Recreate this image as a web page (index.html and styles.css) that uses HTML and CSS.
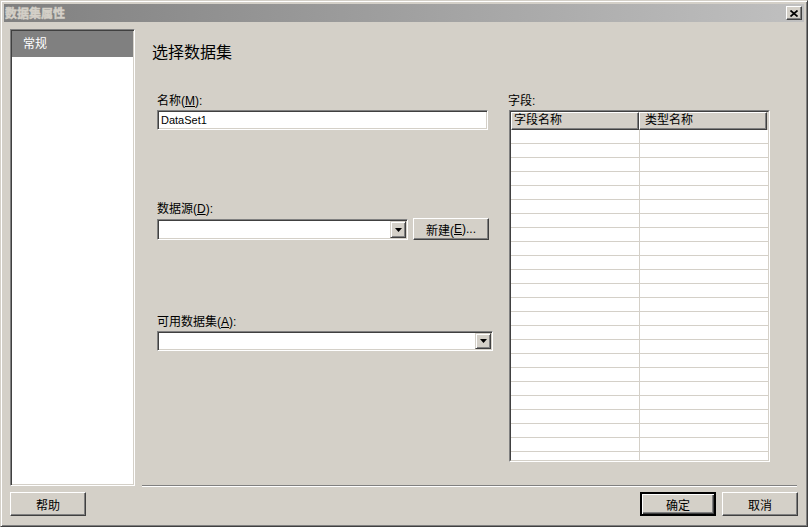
FILE: index.html
```html
<!DOCTYPE html>
<html lang="zh-CN">
<head>
<meta charset="utf-8">
<title>数据集属性</title>
<link rel="stylesheet" href="styles.css">
</head>
<body>
<div class="window">
  <div class="titlebar">
    <span class="title">数据集属性</span>
    <span class="close-btn"><svg width="8" height="7" viewBox="0 0 8 7"><path d="M0.5 0.5 L7.5 6.5 M7.5 0.5 L0.5 6.5" stroke="#000" stroke-width="1.7" fill="none"/></svg></span>
  </div>
  <div class="body">
    <div class="sidebar">
      <div class="nav-item selected">常规</div>
    </div>
    <div class="main">
      <div class="heading">选择数据集</div>
      <div class="columns">
        <div class="form-col">
          <div class="label">名称(<u>M</u>):</div>
          <div class="textbox name-box">DataSet1</div>
          <div class="label ds-label">数据源(<u>D</u>):</div>
          <div class="combo-row">
            <div class="combo ds-combo">
              <div class="combo-field"></div>
              <span class="drop-btn"><svg width="7" height="4" viewBox="0 0 7 4"><polygon points="0,0 7,0 3.5,4" fill="#000"/></svg></span>
            </div>
            <div class="btn new-btn">新建(<u>E</u>)...</div>
          </div>
          <div class="label avail-label">可用数据集(<u>A</u>):</div>
          <div class="combo avail-combo">
            <div class="combo-field"></div>
            <span class="drop-btn"><svg width="7" height="4" viewBox="0 0 7 4"><polygon points="0,0 7,0 3.5,4" fill="#000"/></svg></span>
          </div>
        </div>
        <div class="fields-col">
          <div class="label">字段:</div>
          <div class="grid">
            <div class="grid-inner">
              <div class="grid-head">
                <div class="hcell h1">字段名称</div>
                <div class="hcell h2">类型名称</div>
              </div>
              <div class="grid-body">
                <div class="row"><div class="cell c1"></div><div class="cell c2"></div></div>
                <div class="row"><div class="cell c1"></div><div class="cell c2"></div></div>
                <div class="row"><div class="cell c1"></div><div class="cell c2"></div></div>
                <div class="row"><div class="cell c1"></div><div class="cell c2"></div></div>
                <div class="row"><div class="cell c1"></div><div class="cell c2"></div></div>
                <div class="row"><div class="cell c1"></div><div class="cell c2"></div></div>
                <div class="row"><div class="cell c1"></div><div class="cell c2"></div></div>
                <div class="row"><div class="cell c1"></div><div class="cell c2"></div></div>
                <div class="row"><div class="cell c1"></div><div class="cell c2"></div></div>
                <div class="row"><div class="cell c1"></div><div class="cell c2"></div></div>
                <div class="row"><div class="cell c1"></div><div class="cell c2"></div></div>
                <div class="row"><div class="cell c1"></div><div class="cell c2"></div></div>
                <div class="row"><div class="cell c1"></div><div class="cell c2"></div></div>
                <div class="row"><div class="cell c1"></div><div class="cell c2"></div></div>
                <div class="row"><div class="cell c1"></div><div class="cell c2"></div></div>
                <div class="row"><div class="cell c1"></div><div class="cell c2"></div></div>
                <div class="row"><div class="cell c1"></div><div class="cell c2"></div></div>
                <div class="row"><div class="cell c1"></div><div class="cell c2"></div></div>
                <div class="row"><div class="cell c1"></div><div class="cell c2"></div></div>
                <div class="row"><div class="cell c1"></div><div class="cell c2"></div></div>
                <div class="row"><div class="cell c1"></div><div class="cell c2"></div></div>
                <div class="row"><div class="cell c1"></div><div class="cell c2"></div></div>
                <div class="row"><div class="cell c1"></div><div class="cell c2"></div></div>
                <div class="row"><div class="cell c1"></div><div class="cell c2"></div></div>
                <div class="row"><div class="cell c1"></div><div class="cell c2"></div></div>
              </div>
            </div>
          </div>
        </div>
      </div>
    </div>
  </div>
  <div class="footer">
    <div class="btn foot-btn">帮助</div>
    <div class="spacer"></div>
    <div class="btn foot-btn default">确定</div>
    <div class="btn foot-btn">取消</div>
  </div>
</div>
</body>
</html>
```

FILE: styles.css
```css
html, body {
  margin: 0;
  padding: 0;
  background: #d4d0c8;
}
body {
  font-family: "Liberation Sans", "Noto Sans CJK SC", sans-serif;
  font-size: 12px;
  color: #000;
}
u { text-decoration: underline; }

.window {
  width: 808px;
  height: 527px;
  box-sizing: border-box;
  border: 1px solid;
  border-color: #d4d0c8 #404040 #404040 #d4d0c8;
  box-shadow: inset 1px 1px #ffffff, inset -1px -1px #808080;
  padding: 3px;
  display: flex;
  flex-direction: column;
  background: #d4d0c8;
}

.titlebar {
  height: 18px;
  flex: none;
  display: flex;
  align-items: center;
  background: linear-gradient(to right, #808080, #c0c0c0);
  padding-left: 1px;
  padding-right: 2px;
}
.title {
  flex: 1;
  color: #d4d0c8;
  font-family: "Noto Sans CJK SC", sans-serif;
  font-weight: 700;
  font-size: 12px;
  line-height: 18px;
  -webkit-text-stroke: 0.5px #d4d0c8;
}
.close-btn {
  width: 16px;
  height: 14px;
  box-sizing: border-box;
  display: flex;
  align-items: center;
  justify-content: center;
  background: #d4d0c8;
  border: 1px solid;
  border-color: #ffffff #404040 #404040 #ffffff;
  box-shadow: inset -1px -1px #808080;
}

.body {
  display: flex;
  padding: 7px 7px 0 6px;
  flex: none;
}
.sidebar {
  width: 125px;
  height: 457px;
  box-sizing: border-box;
  background: #fff;
  border: 1px solid;
  border-color: #808080 #ffffff #ffffff #808080;
  box-shadow: inset 1px 1px #404040, inset -1px -1px #d4d0c8;
  padding: 1px;
}
.nav-item {
  height: 26px;
  line-height: 26px;
  padding-left: 11px;
}
.nav-item.selected {
  background: #808080;
  color: #fff;
}

.main {
  flex: 1;
  margin-left: 7px;
  height: 457px;
  box-sizing: border-box;
  border-bottom: 1px solid #808080;
  box-shadow: 0 1px 0 #ffffff;
  padding-left: 10px;
}
.heading {
  margin-top: 13px;
  font-size: 16px;
  line-height: 22px;
}
.columns {
  display: flex;
  gap: 15px;
  margin-top: 30px;
  padding-left: 5px;
}
.form-col {
  width: 336px;
  flex: none;
}
.label {
  height: 14px;
  line-height: 14px;
  margin-bottom: 2px;
  white-space: nowrap;
}
.textbox {
  height: 20px;
  box-sizing: border-box;
  background: #fff;
  border: 1px solid;
  border-color: #808080 #ffffff #ffffff #808080;
  box-shadow: inset 1px 1px #404040, inset -1px -1px #d4d0c8;
  padding: 1px 3px;
  font-size: 11px;
  line-height: 16px;
}
.name-box { width: 331px; }

.ds-label { margin-top: 72px; }
.combo-row {
  display: flex;
  align-items: flex-start;
  gap: 5px;
}
.combo {
  box-sizing: border-box;
  background: #fff;
  border: 1px solid;
  border-color: #808080 #ffffff #ffffff #808080;
  box-shadow: inset 1px 1px #404040, inset -1px -1px #d4d0c8;
  padding: 1px;
  display: flex;
}
.combo-field { flex: 1; }
.drop-btn {
  width: 16px;
  flex: none;
  box-sizing: border-box;
  background: #d4d0c8;
  border: 1px solid;
  border-color: #d4d0c8 #404040 #404040 #d4d0c8;
  box-shadow: inset 1px 1px #ffffff, inset -1px -1px #808080;
  display: flex;
  align-items: center;
  justify-content: center;
}
.ds-combo {
  width: 251px;
  height: 21px;
  margin-top: 1px;
}
.avail-label { margin-top: 75px; }
.avail-combo {
  width: 336px;
  height: 20px;
}

.btn {
  box-sizing: border-box;
  background: #d4d0c8;
  border: 1px solid;
  border-color: #ffffff #404040 #404040 #ffffff;
  box-shadow: inset -1px -1px #808080;
  display: flex;
  align-items: center;
  justify-content: center;
  white-space: nowrap;
}
.new-btn {
  width: 76px;
  height: 22px;
}

.fields-col {
  width: 262px;
  flex: none;
}
.grid {
  margin-left: 1px;
  width: 261px;
  height: 352px;
  box-sizing: border-box;
  border: 1px solid;
  border-color: #808080 #ffffff #ffffff #808080;
}
.grid-inner {
  height: 100%;
  box-sizing: border-box;
  border: 1px solid;
  border-color: #404040 #d4d0c8 #d4d0c8 #404040;
  background: #fff;
  overflow: hidden;
}
.grid-head {
  display: flex;
  height: 18px;
  background: #d4d0c8;
}
.hcell {
  box-sizing: border-box;
  height: 18px;
  line-height: 15px;
  border: 1px solid;
  border-color: #ffffff #404040 #404040 #ffffff;
  box-shadow: inset -1px -1px #808080;
}
.h1 { width: 128px; padding-left: 2px; }
.h2 { width: 128px; padding-left: 5px; }
.row {
  display: flex;
  height: 14px;
  box-sizing: border-box;
  border-bottom: 1px solid #d4d0c8;
}
.cell { height: 13px; }
.c1 {
  width: 128px;
  border-right: 1px solid #d4d0c8;
}
.c2 { flex: 1; }

.footer {
  display: flex;
  gap: 6px;
  padding: 6px 6px 0 6px;
}
.spacer { flex: 1; }
.foot-btn {
  width: 76px;
  height: 24px;
}
.foot-btn.default {
  border: 2px solid #000;
  box-shadow: inset 1px 1px #ffffff, inset -1px -1px #404040, inset -2px -2px #808080;
}
```
